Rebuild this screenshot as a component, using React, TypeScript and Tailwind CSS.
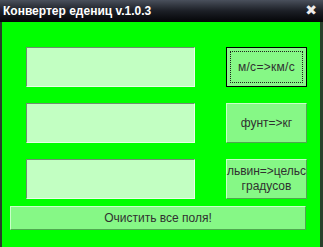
const fields = [
  { label: ["м/с=>км/с"], focused: true },
  { label: ["фунт=>кг"], focused: false },
  { label: ["львин=>цельс", "градусов"], focused: false },
];

const App = () => {
  return (
    <div className="w-[323px] h-[247px] flex flex-col overflow-hidden font-['Liberation_Sans',sans-serif]">
      <div className="h-[22px] shrink-0 flex items-center justify-between pl-[3px] pr-[6px] bg-gradient-to-b from-[#4a505c] via-[#1c1f26] to-[#050608]">
        <span className="text-white text-[12px] font-bold leading-none">
          Конвертер едениц v.1.0.3
        </span>
        <span className="text-[#ececec] text-[14px] font-['DejaVu_Sans',sans-serif] leading-none -mt-[3px]">
          ✖
        </span>
      </div>
      <div className="flex-1 flex flex-col bg-[#00ff00] border-l-2 border-r-[3px] border-[#28402a] pt-[25px] pl-[8px] pr-[13px]">
        <div className="flex flex-col gap-[16px] pl-[16px]">
          {fields.map((f, i) => (
            <div key={i} className="flex items-center gap-[31px]">
              <div className="w-[169px] h-[40px] bg-[#c2ffc2] border border-t-[#6f8f6f] border-l-[#6f8f6f] border-b-[#e8ffe8] border-r-[#e8ffe8]" />
              {f.focused ? (
                <button className="w-[81px] h-[40px] bg-[#86f886] border border-black p-[3px] text-[12px] text-[#303030]">
                  <div className="w-full h-full border border-dotted border-[#202020] flex items-center justify-center tracking-[0.3px]">
                    {f.label[0]}
                  </div>
                </button>
              ) : (
                <button className="w-[81px] h-[40px] bg-[#86f886] border border-t-[#c8ffc8] border-l-[#c8ffc8] border-b-[#4fa84f] border-r-[#4fa84f] text-[12px] leading-[15px] text-[#303030] flex flex-col items-center justify-center">
                  {f.label.map((l) => (
                    <span key={l}>{l}</span>
                  ))}
                </button>
              )}
            </div>
          ))}
        </div>
        <button className="mt-[7px] w-[296px] h-[24px] bg-[#86f886] border border-t-[#c8ffc8] border-l-[#c8ffc8] border-b-[#4fa84f] border-r-[#4fa84f] text-[12px] text-[#303030] flex items-center justify-center">
          Очистить все поля!
        </button>
      </div>
    </div>
  );
};

export default App;
